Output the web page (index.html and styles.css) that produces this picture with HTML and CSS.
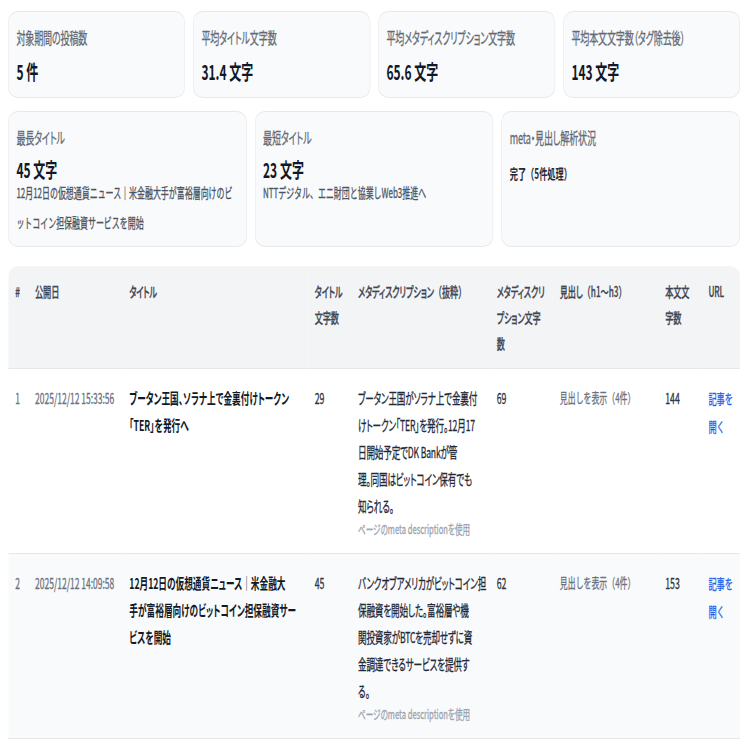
FILE: index.html
```html
<!DOCTYPE html>
<html lang="ja">
<head>
<meta charset="utf-8">
<title>投稿分析</title>
<link rel="stylesheet" href="styles.css">
</head>
<body>
<div class="frame">
<div class="page">
  <div class="stats stats-4">
    <div class="card">
      <div class="label">対象期間の投稿数</div>
      <div class="value">5 件</div>
    </div>
    <div class="card">
      <div class="label">平均タイトル文字数</div>
      <div class="value">31.4 文字</div>
    </div>
    <div class="card">
      <div class="label">平均メタディスクリプション文字数</div>
      <div class="value">65.6 文字</div>
    </div>
    <div class="card">
      <div class="label">平均本文文字数（タグ除去後）</div>
      <div class="value">143 文字</div>
    </div>
  </div>
  <div class="stats stats-3">
    <div class="card card-detail">
      <div class="label">最長タイトル</div>
      <div class="value">45 文字</div>
      <div class="sub">12月12日の仮想通貨ニュース｜米金融大手が富裕層向けのビットコイン担保融資サービスを開始</div>
    </div>
    <div class="card card-detail">
      <div class="label">最短タイトル</div>
      <div class="value">23 文字</div>
      <div class="sub">NTTデジタル、エニ財団と協業しWeb3推進へ</div>
    </div>
    <div class="card">
      <div class="label">meta・見出し解析状況</div>
      <div class="value value-sm">完了（5件処理）</div>
    </div>
  </div>
  <div class="table-wrap">
    <table class="posts">
      <colgroup>
        <col class="c-no">
        <col class="c-date">
        <col class="c-title">
        <col class="c-tlen">
        <col class="c-desc">
        <col class="c-dlen">
        <col class="c-head">
        <col class="c-blen">
        <col class="c-url">
      </colgroup>
      <thead>
        <tr>
          <th>#</th>
          <th>公開日</th>
          <th>タイトル</th>
          <th>タイトル文字数</th>
          <th>メタディスクリプション<span class="wide">（抜粋）</span></th>
          <th>メタディスクリプション文字数</th>
          <th>見出し<span class="wide">（h1〜h3）</span></th>
          <th>本文文字数</th>
          <th>URL</th>
        </tr>
      </thead>
      <tbody>
        <tr>
          <td class="muted">1</td>
          <td class="date">2025/12/12 15:33:56</td>
          <td class="title">ブータン王国、ソラナ上で金裏付けトークン「TER」を発行へ</td>
          <td class="num">29</td>
          <td class="desc">ブータン王国がソラナ上で金裏付<br>けトークン「TER」を発行。12月17<br>日開始予定でDK Bankが管<br>理。同国はビットコイン保有でも<br>知られる。<div class="note">ページのmeta descriptionを使用</div></td>
          <td class="num">69</td>
          <td class="heads">見出しを表示（4件）</td>
          <td class="num">144</td>
          <td><a class="link" href="#">記事を開く</a></td>
        </tr>
        <tr>
          <td class="muted">2</td>
          <td class="date">2025/12/12 14:09:58</td>
          <td class="title">12月12日の仮想通貨ニュース｜米金融大<br>手が富裕層向けのビットコイン担保融資サー<br>ビスを開始</td>
          <td class="num">45</td>
          <td class="desc">バンクオブアメリカがビットコイン担<br>保融資を開始した。富裕層や機<br>関投資家がBTCを売却せずに資<br>金調達できるサービスを提供す<br>る。<div class="note">ページのmeta descriptionを使用</div></td>
          <td class="num">62</td>
          <td class="heads">見出しを表示（4件）</td>
          <td class="num">153</td>
          <td><a class="link" href="#">記事を開く</a></td>
        </tr>
      </tbody>
    </table>
  </div>
</div>
</div>
</body>
</html>
```

FILE: styles.css
```css
html, body {
  margin: 0;
  padding: 0;
  background: #ffffff;
  overflow-x: hidden;
}

.frame {
  width: 749px;
  overflow: hidden;
}

.page {
  width: 1280px;
  box-sizing: border-box;
  padding: 11px 15px 0 14px;
  transform: scaleX(0.585);
  transform-origin: 0 0;
  font-family: "Noto Sans CJK JP", "Noto Sans", sans-serif;
  color: #111827;
  -webkit-text-stroke: 0.3px currentColor;
}

.stats {
  display: grid;
  column-gap: 14px;
}

.stats-4 {
  grid-template-columns: repeat(4, 1fr);
}

.stats-3 {
  grid-template-columns: repeat(3, 1fr);
  margin-top: 13px;
}

.card {
  background: #f9fafb;
  border: 1px solid #e7e8ec;
  border-radius: 17px / 10px;
  padding: 13px 13px;
}

.label {
  font-size: 15.5px;
  line-height: 25px;
  color: #646a75;
  font-feature-settings: "palt";
  letter-spacing: -0.3px;
}

.value {
  margin-top: 8px;
  font-size: 20.5px;
  line-height: 26px;
  font-weight: 700;
  color: #111827;
  -webkit-text-stroke: 0;
}

.card-detail .value {
  margin-top: 6px;
}

.value-sm {
  margin-top: 10px;
  font-size: 14px;
  color: #1f2937;
}

.sub {
  margin: -5px 0 -4px;
  font-size: 13.6px;
  line-height: 30px;
  color: #4b5563;
}

.table-wrap {
  margin-top: 19px;
  border-radius: 17px 17px 0 0 / 10px 10px 0 0;
  overflow: hidden;
}

.posts {
  width: 100%;
  border-collapse: collapse;
  table-layout: fixed;
}

.c-no { width: 34px; }
.c-date { width: 161px; }
.c-title { width: 317px; }
.c-tlen { width: 74px; }
.c-desc { width: 237px; }
.c-dlen { width: 108px; }
.c-head { width: 180px; }
.c-blen { width: 74px; }
.c-url { width: 66px; }

.posts th {
  background: #f3f4f6;
  text-align: left;
  vertical-align: top;
  padding: 12px 12px;
  font-size: 14px;
  line-height: 26px;
  font-weight: 500;
  color: #3f4652;
  letter-spacing: -0.3px;
  font-feature-settings: "palt";
  border-bottom: 1px solid #e5e7eb;
}

.wide {
  font-feature-settings: normal;
  letter-spacing: 0;
}

.posts td {
  vertical-align: top;
  padding: 15px 12px 14px;
  font-size: 14.5px;
  line-height: 27px;
  color: #374151;
  border-bottom: 1px solid #e5e7eb;
}

.posts tbody tr:nth-child(even) {
  background: #f9fafb;
}

.posts td.num {
  font-size: 15px;
  color: #2d3440;
}

.posts td.muted {
  color: #6b7280;
}

.posts td.date {
  color: #6b7280;
  font-size: 14.5px;
  white-space: nowrap;
}

.posts td.title {
  font-size: 14.8px;
  font-weight: 700;
  color: #111827;
  font-feature-settings: "palt";
  -webkit-text-stroke: 0;
}

.posts td.desc {
  font-size: 14.7px;
  letter-spacing: -0.3px;
  white-space: nowrap;
  color: #1f2937;
  font-feature-settings: "palt";
}

.posts td.desc .note {
  font-size: 13px;
  letter-spacing: 0;
}

.posts td.heads {
  font-size: 13.5px;
  color: #6b7280;
}

.note {
  line-height: 20px;
  color: #9ca3af;
}

.link {
  font-size: 14px;
  color: #2563eb;
  text-decoration: none;
}
```
